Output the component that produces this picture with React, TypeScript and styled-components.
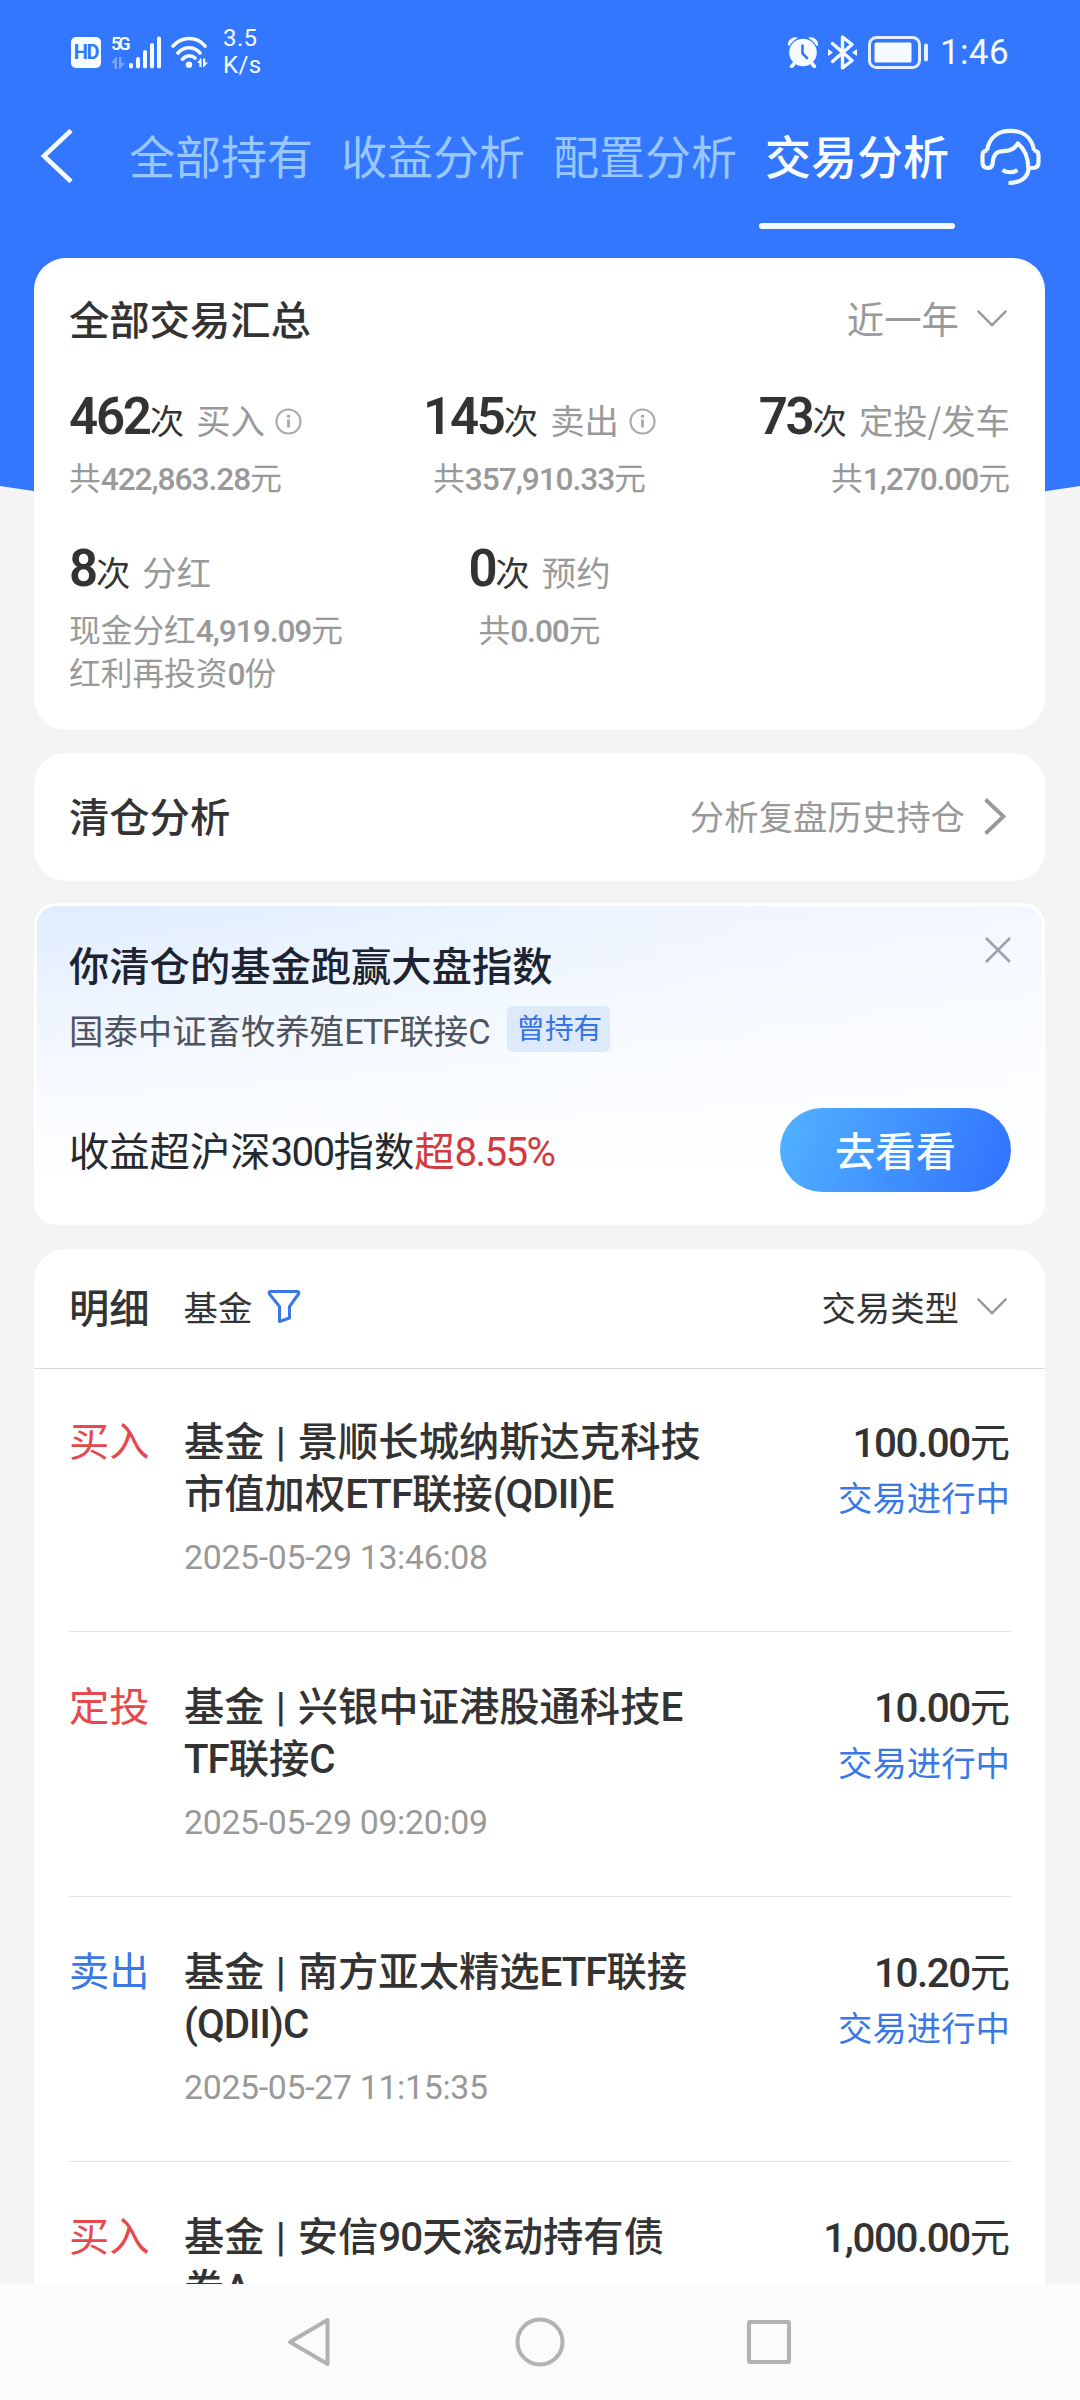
import React from "react";
import styled, { createGlobalStyle } from "styled-components";

const cjk = `"Noto Sans CJK SC", "Noto Sans", sans-serif`;
const latin = `Roboto, "Noto Sans CJK SC", sans-serif`;

const c = {
  blue: "#3377ff",
  link: "#3b78e7",
  red: "#e5484d",
  ink: "#333333",
  grey: "#999999",
  page: "#f4f4f4",
};

const GlobalStyle = createGlobalStyle`
  * { box-sizing: border-box; }
  body { margin: 0; background: ${c.page}; }
`;

const Screen = styled.div`
  width: 1080px;
  height: 2400px;
  overflow: hidden;
  display: flex;
  flex-direction: column;
  background: ${c.page};
  color: ${c.ink};
  font-family: ${cjk};
  white-space: nowrap;
`;

const Header = styled.header`
  flex: none;
  height: 530px;
  background: ${c.blue};
  clip-path: path("M0 0H1080V486Q540 570 0 486Z");
`;

const StatusBar = styled.div`
  display: flex;
  justify-content: space-between;
  height: 104px;
  padding: 0 71px 0 71px;
  color: #f6fbff;
  font-family: ${latin};
`;

const StatusGroup = styled.div`
  display: flex;
  align-items: center;
  height: 104px;
`;

const HdBadge = styled.span`
  width: 30px;
  height: 31px;
  margin-top: 1px;
  border-radius: 5px;
  background: #f6fbff;
  color: ${c.blue};
  font-size: 20px;
  font-weight: 700;
  line-height: 31px;
  text-align: center;
  letter-spacing: -1.2px;
`;

const Cellular = styled.div`
  display: flex;
  align-items: flex-start;
  height: 33px;
  margin-left: 10px;
`;

const Generation = styled.div`
  display: flex;
  flex-direction: column;
  width: 17px;
  gap: 5px;
  font-size: 18px;
  font-weight: 600;
  line-height: 16px;
  letter-spacing: -3px;
`;

const Speed = styled.div`
  margin-left: 14px;
  padding-bottom: 0;
  font-size: 24px;
  font-weight: 400;
  line-height: 27px;
  letter-spacing: 0.4px;
`;

const Clock = styled.span`
  margin-left: 11px;
  font-size: 35px;
  font-weight: 400;
  letter-spacing: 0.4px;
`;

const Spaced = styled.span<{ $left: number }>`
  display: flex;
  margin-left: ${(p) => p.$left}px;
`;

const NavBar = styled.nav`
  display: flex;
  align-items: flex-start;
  height: 126px;
  padding: 0 39px 0 40px;
`;

const BackButton = styled.span`
  display: flex;
  width: 89px;
  padding-top: 25px;
`;

const Tabs = styled.div`
  display: flex;
  gap: 28px;
  flex: 1;
`;

const Tab = styled.div<{ $active?: boolean }>`
  display: flex;
  flex-direction: column;
  align-items: center;
  width: 184px;
  font-size: 46px;
  line-height: 66px;
  padding-top: 17px;
  color: ${(p) => (p.$active ? "#f8fdff" : "#99c7ff")};
  font-weight: ${(p) => (p.$active ? 500 : 400)};
`;

const Underline = styled.span`
  width: 196px;
  height: 6px;
  margin-top: 36px;
  border-radius: 3px;
  background: #f4fbff;
`;

const Support = styled.span`
  display: flex;
  padding-top: 24px;
`;

const Content = styled.main`
  position: relative;
  flex: 1;
  min-height: 0;
  overflow: hidden;
  margin-top: -272px;
  padding: 0 35px 0 34px;
`;

const Card = styled.section`
  border-radius: 32px;
  background: #fff;
`;

const SummaryCard = styled(Card)`
  height: 472px;
  padding: 32px 35px 0;
`;

const Row = styled.div`
  display: flex;
  align-items: center;
  justify-content: space-between;
`;

const Title = styled.h2<{ $color?: string }>`
  margin: 0;
  font-size: 40.3px;
  font-weight: 500;
  line-height: 56px;
  color: ${(p) => p.$color ?? c.ink};
`;

const Choice = styled.span<{ $size: number; $color: string; $gap: number }>`
  display: flex;
  align-items: center;
  gap: ${(p) => p.$gap}px;
  padding-right: 3px;
  font-size: ${(p) => p.$size}px;
  line-height: 56px;
  color: ${(p) => p.$color};
`;

const StatGrid = styled.div`
  display: grid;
  grid-template-columns: repeat(3, 1fr);
  grid-template-rows: 152px auto;
  margin-top: 41px;
`;

const Stat = styled.div<{ $align: "flex-start" | "center" | "flex-end" }>`
  display: flex;
  flex-direction: column;
  align-items: ${(p) => p.$align};
`;

const StatHead = styled.div`
  display: flex;
  align-items: baseline;
  height: 60px;
  font-size: 34.4px;
  line-height: 60px;
`;

const Count = styled.span`
  font-family: ${latin};
  font-size: 51px;
  font-weight: 600;
  letter-spacing: -2.2px;
`;

const StatLabel = styled.span`
  margin-left: 12px;
  color: ${c.grey};
`;

const InfoMark = styled.span`
  align-self: center;
  display: flex;
  margin: 8px 0 0 10px;
`;

const StatNote = styled.div`
  margin-top: 8px;
  font-size: 31.7px;
  line-height: 43px;
  color: ${c.grey};
`;

const Latin = styled.span<{ $weight?: number; $track?: number }>`
  font-family: ${latin};
  font-weight: ${(p) => p.$weight ?? "inherit"};
  letter-spacing: ${(p) => p.$track ?? -0.04}em;
  line-height: 1;
`;

const ReviewCard = styled(Card)`
  display: flex;
  align-items: center;
  justify-content: space-between;
  height: 128px;
  margin-top: 23px;
  padding: 0 35px 5px;
`;

const ReviewArrow = styled.span`
  display: flex;
  padding-top: 4px;
`;

const PromoCard = styled(Card)`
  height: 322px;
  margin-top: 22px;
  padding: 30px 31px 0 32px;
  border: 3px solid #fff;
  border-radius: 22px;
  background:
    linear-gradient(180deg, rgba(255, 255, 255, 0) 0%, rgba(255, 255, 255, 0.65) 50%, #fff 88%),
    linear-gradient(90deg, #e0edff 0%, #e9f3ff 45%, #f0f5ff 70%, #f3f8ff 100%);
`;

const CloseMark = styled.span`
  display: flex;
  align-self: flex-start;
  padding: 1px 0 0;
`;

const FundLine = styled.div`
  display: flex;
  align-items: center;
  height: 48px;
  margin-top: 13px;
  font-size: 34.4px;
  line-height: 48px;
  color: #50545f;
`;

const HeldTag = styled.span`
  margin-left: 18px;
  height: 46px;
  padding: 0 8px 0 9px;
  border-radius: 6px;
  background: #dceafc;
  color: #3573e6;
  font-size: 28.7px;
  line-height: 41px;
`;

const ResultRow = styled(Row)`
  height: 84px;
  margin-top: 55px;
  font-size: 40.3px;
  line-height: 54px;
  color: #262a2f;
`;

const ResultText = styled.span`
  padding-bottom: 2px;
`;

const Gain = styled.span`
  color: #d13a3e;
`;

const GoButton = styled.button`
  width: 231px;
  height: 84px;
  padding: 0 0 4px;
  border: 0;
  border-radius: 42px;
  background: linear-gradient(110deg, #50b0ff 5%, #3f8fff 55%, #3274ff 95%);
  color: #f8fdff;
  font-family: ${cjk};
  font-size: 40.3px;
  font-weight: 500;
`;

const DetailCard = styled(Card)`
  margin-top: 24px;
  height: 1200px;
`;

const DetailHead = styled(Row)`
  height: 120px;
  padding: 0 35px 5px;
  border-bottom: 1px solid #dcdcdc;
`;

const FilterGroup = styled.div`
  display: flex;
  align-items: center;
`;

const FilterLabel = styled.span`
  margin: 0 15px 0 34px;
  font-size: 34.4px;
  line-height: 56px;
`;

const Record = styled.article`
  display: grid;
  grid-template-columns: 115px 1fr auto;
  height: 265.2px;
  margin: 0 34px 0 35px;
  padding: 46px 1px 0 0;
  border-bottom: 1px solid #e2e2e2;
  font-size: 40.3px;
  line-height: 52px;

  &:nth-child(2) {
    height: 263px;
    padding-top: 44px;
  }
`;

const Kind = styled.span<{ $color: string }>`
  color: ${(p) => p.$color};
`;

const FundName = styled.div`
  font-weight: 500;
`;

const Bar = styled.span`
  margin: 0 3px 0 2px;
  font-family: ${latin};
  line-height: 1;
`;

const Stamp = styled.div`
  margin-top: 16px;
  font-family: ${latin};
  font-size: 33.8px;
  line-height: 50px;
  letter-spacing: -0.3px;
  color: ${c.grey};
`;

const AmountBox = styled.div`
  text-align: right;
`;

const Amount = styled.div`
  line-height: 56px;
  margin-top: -1px;
`;

const State = styled.div`
  margin-top: 2px;
  font-size: 34.4px;
  color: ${c.link};
`;

const SystemNav = styled.footer`
  flex: none;
  display: flex;
  align-items: center;
  height: 116px;
  padding-left: 284px;
  background: #fafbfd;
`;

/* Runs of ASCII are set in the narrower latin face, the rest stays CJK. */
const Mixed = ({ text, weight, track }: { text: string; weight?: number; track?: number }) => (
  <>
    {text.split(/([\x21-\x7e]+)/).map((part, i) => {
      if (i % 2 === 0) return part;
      if (part === "|") return <Bar key={i}>{part}</Bar>;
      return (
        <Latin key={i} $weight={weight} $track={track}>
          {part}
        </Latin>
      );
    })}
  </>
);

const ChevronDown = () => (
  <svg width="30" height="17" viewBox="0 0 30 17" fill="none" stroke="#999" strokeWidth="2.4">
    <path d="M0.8 0.8L15 15.2L29.2 0.8" />
  </svg>
);

const Info = () => (
  <svg width="27" height="27" viewBox="0 0 27 27" fill="none" stroke="#aaa" strokeWidth="2.2">
    <circle cx="13.5" cy="13.5" r="12" />
    <path d="M13.5 11.5V19.5" strokeWidth="2.8" />
    <circle cx="13.5" cy="8.2" r="1.7" fill="#aaa" stroke="none" />
  </svg>
);

const DataArrows = ({ opacity }: { opacity: number }) => (
  <svg width="14" height="12" viewBox="0 0 14 12" fill="#f6fbff" opacity={opacity}>
    <path d="M0 6L5 0H6V12H3.5V6Z M14 6L9 12H8V0H10.5V6Z" />
  </svg>
);

const Signal = () => (
  <svg width="33" height="33" viewBox="0 0 33 33" stroke="#f6fbff" strokeWidth="4" strokeLinecap="round">
    <path d="M3 29V30.5M10 23V30.5M17 16V30.5M24 9V30.5M31 2.5V30.5" />
  </svg>
);

const Wifi = () => (
  <svg width="38" height="33" viewBox="0 0 38 33" fill="none" stroke="#f6fbff" strokeWidth="3.6" strokeLinecap="round">
    <path d="M2 10C11 0 26 0 34 10M7 17C13 10 23 10 29 17M11.5 23.2C15 19.2 21 19.2 24 22" />
    <circle cx="18" cy="28.7" r="3.2" fill="#f6fbff" stroke="none" />
    <path d="M26 27L29.5 22.5H30.5V31H28.3V27Z M37 26.5L33 31H32V22.5H34.2V26.5Z" fill="#f6fbff" stroke="none" />
  </svg>
);

const Alarm = () => (
  <svg width="32" height="32" viewBox="0 0 32 32" fill="none" strokeLinecap="round">
    <path d="M7.5 27.5L4.5 30.5M24.5 27.5L27.5 30.5" stroke="#f6fbff" strokeWidth="3.4" />
    <path d="M1 9.5C0.5 4 5 0 10.5 1.5L8 5Q4 7 3 10ZM31 9.5C31.5 4 27 0 21.5 1.5L24 5Q28 7 29 10Z" fill="#f6fbff" />
    <circle cx="16" cy="16.5" r="15" fill={c.blue} />
    <circle cx="16" cy="16.5" r="13.8" fill="#f6fbff" />
    <path d="M7 27.5L5 30M25 27.5L27 30" stroke="#f6fbff" strokeWidth="3.4" />
    <path d="M15.5 9.5V17.5L20 22" stroke={c.blue} strokeWidth="2.6" />
  </svg>
);

const Bluetooth = () => (
  <svg width="29" height="35" viewBox="0 0 29 35" fill="none" stroke="#f6fbff" strokeWidth="3.4" strokeLinejoin="round" strokeLinecap="round">
    <path d="M4.5 8.5L24 25.5L14.5 33V2L24 9.5L4.5 26.5" />
    <path d="M0.5 15L4 17.5L0.5 20ZM28.5 15L25 17.5L28.5 20Z" fill="#f6fbff" strokeWidth="1.2" />
  </svg>
);

const Battery = () => (
  <svg width="61" height="33" viewBox="0 0 61 33" fill="none" stroke="#e4f0ff" strokeWidth="3">
    <rect x="1.5" y="1.5" width="50" height="30" rx="7" />
    <rect x="6.5" y="6.5" width="37" height="20" rx="1.5" fill="#f6fbff" stroke="none" />
    <path d="M58 9.5V23.5" strokeWidth="4" strokeLinecap="round" />
  </svg>
);

const Back = () => (
  <svg width="33" height="54" viewBox="0 0 33 54" fill="none" stroke="#f8fdff" strokeWidth="4.6">
    <path d="M31 1.5L4 27L31 52.5" />
  </svg>
);

const Headset = () => (
  <svg width="61" height="58" viewBox="0 0 61 58" fill="none" stroke="#f4fbff" strokeWidth="4.2" strokeLinejoin="round">
    <path d="M7 22.5C9 9.5 18 2.8 30.5 2.8S52 9.5 54 22.5" />
    <path d="M7.5 22.5C4 22.5 2.5 24.5 2.5 27V34C2.5 38 4 40 8 40C11.5 40 12.5 38 12.7 35C13.5 24.5 18 23 26 22.8C31 22.6 34.5 20.5 38 15.5C44 20.5 48 27 48.3 40" />
    <path d="M53.5 22.5C57 22.5 58.5 24.5 58.5 27V34C58.5 38 57 40 53 40H48.5C48.5 49 41 55 28.5 55" />
    <path d="M22.5 42C27 45 33 45 37.5 42" />
  </svg>
);

const ChevronRight = () => (
  <svg width="24" height="37" viewBox="0 0 24 37" fill="none" stroke="#999" strokeWidth="3.8">
    <path d="M2.5 1.5L20.5 18.5L2.5 35.5" />
  </svg>
);

const Close = () => (
  <svg width="26" height="26" viewBox="0 0 26 26" fill="none" stroke="#9aa0ad" strokeWidth="2.5">
    <path d="M1 1L25 25M25 1L1 25" />
  </svg>
);

const Funnel = () => (
  <svg width="34" height="35" viewBox="0 0 34 35" fill="none" stroke={c.link} strokeWidth="3" strokeLinejoin="round">
    <path d="M3.5 2.5H30.5C32 2.5 32.3 4 31.5 5L22.5 17.5V29L12.5 32.5V17.5L2.5 5C1.7 4 2 2.5 3.5 2.5Z" />
  </svg>
);

const NavGlyphs = () => (
  <svg width="512" height="58" viewBox="0 0 512 58" fill="none" stroke="#b2b2b5" strokeWidth="4" strokeLinejoin="round">
    <path d="M43.5 7V51L6 29Z" />
    <circle cx="256" cy="29" r="22.5" />
    <rect x="465" y="9" width="40" height="40" rx="1" />
  </svg>
);

type StatItem = {
  count: string;
  label: string;
  info?: boolean;
  notes: string[];
  align: "flex-start" | "center" | "flex-end";
};

const stats: StatItem[] = [
  { count: "462", label: "买入", info: true, notes: ["共422,863.28元"], align: "flex-start" },
  { count: "145", label: "卖出", info: true, notes: ["共357,910.33元"], align: "center" },
  { count: "73", label: "定投/发车", notes: ["共1,270.00元"], align: "flex-end" },
  { count: "8", label: "分红", notes: ["现金分红4,919.09元", "红利再投资0份"], align: "flex-start" },
  { count: "0", label: "预约", notes: ["共0.00元"], align: "center" },
];

const records = [
  { kind: "买入", color: c.red, name: ["基金 | 景顺长城纳斯达克科技", "市值加权ETF联接(QDII)E"], time: "2025-05-29 13:46:08", amount: "100.00元", state: "交易进行中" },
  { kind: "定投", color: c.red, name: ["基金 | 兴银中证港股通科技E", "TF联接C"], time: "2025-05-29 09:20:09", amount: "10.00元", state: "交易进行中" },
  { kind: "卖出", color: c.link, name: ["基金 | 南方亚太精选ETF联接", "(QDII)C"], time: "2025-05-27 11:15:35", amount: "10.20元", state: "交易进行中" },
  { kind: "买入", color: c.red, name: ["基金 | 安信90天滚动持有债", "券A"], time: "", amount: "1,000.00元", state: "" },
];

const tabs = ["全部持有", "收益分析", "配置分析", "交易分析"];

export default function App() {
  return (
    <Screen>
      <GlobalStyle />
      <Header>
        <StatusBar>
          <StatusGroup>
            <HdBadge>HD</HdBadge>
            <Cellular>
              <Generation>
                5G
                <DataArrows opacity={0.35} />
              </Generation>
              <Signal />
            </Cellular>
            <Spaced $left={10}>
              <Wifi />
            </Spaced>
            <Speed>
              3.5
              <br />
              K/s
            </Speed>
          </StatusGroup>
          <StatusGroup>
            <Alarm />
            <Spaced $left={9}>
              <Bluetooth />
            </Spaced>
            <Spaced $left={11}>
              <Battery />
            </Spaced>
            <Clock>1:46</Clock>
          </StatusGroup>
        </StatusBar>
        <NavBar>
          <BackButton>
            <Back />
          </BackButton>
          <Tabs>
            {tabs.map((t, i) => (
              <Tab key={t} $active={i === 3}>
                {t}
                {i === 3 && <Underline />}
              </Tab>
            ))}
          </Tabs>
          <Support>
            <Headset />
          </Support>
        </NavBar>
      </Header>

      <Content>
        <SummaryCard>
          <Row>
            <Title>全部交易汇总</Title>
            <Choice $size={37.4} $color={c.grey} $gap={18}>
              近一年
              <ChevronDown />
            </Choice>
          </Row>
          <StatGrid>
            {stats.map((s) => (
              <Stat key={s.label} $align={s.align}>
                <StatHead>
                  <Count>{s.count}</Count>次<StatLabel>{s.label}</StatLabel>
                  {s.info && (
                    <InfoMark>
                      <Info />
                    </InfoMark>
                  )}
                </StatHead>
                <StatNote>
                  {s.notes.map((n) => (
                    <div key={n}>
                      <Mixed text={n} weight={500} track={-0.033} />
                    </div>
                  ))}
                </StatNote>
              </Stat>
            ))}
          </StatGrid>
        </SummaryCard>

        <ReviewCard>
          <Title>清仓分析</Title>
          <Choice $size={34.4} $color={c.grey} $gap={18}>
            分析复盘历史持仓
            <ReviewArrow>
              <ChevronRight />
            </ReviewArrow>
          </Choice>
        </ReviewCard>

        <PromoCard>
          <Row>
            <Title $color="#1d2330">你清仓的基金跑赢大盘指数</Title>
            <CloseMark>
              <Close />
            </CloseMark>
          </Row>
          <FundLine>
            <span>
              <Mixed text="国泰中证畜牧养殖ETF联接C" />
            </span>
            <HeldTag>曾持有</HeldTag>
          </FundLine>
          <ResultRow>
            <ResultText>
              <Mixed text="收益超沪深300指数" />
              <Gain>
                <Mixed text="超8.55%" />
              </Gain>
            </ResultText>
            <GoButton>去看看</GoButton>
          </ResultRow>
        </PromoCard>

        <DetailCard>
          <DetailHead>
            <FilterGroup>
              <Title>明细</Title>
              <FilterLabel>基金</FilterLabel>
              <Funnel />
            </FilterGroup>
            <Choice $size={34.4} $color={c.ink} $gap={18}>
              交易类型
              <ChevronDown />
            </Choice>
          </DetailHead>
          {records.map((r, i) => (
            <Record key={i}>
              <Kind $color={r.color}>{r.kind}</Kind>
              <div>
                {r.name.map((line) => (
                  <FundName key={line}>
                    <Mixed text={line} track={-0.025} />
                  </FundName>
                ))}
                <Stamp>{r.time}</Stamp>
              </div>
              <AmountBox>
                <Amount>
                  <Mixed text={r.amount} weight={500} track={-0.035} />
                </Amount>
                <State>{r.state}</State>
              </AmountBox>
            </Record>
          ))}
        </DetailCard>
      </Content>

      <SystemNav>
        <NavGlyphs />
      </SystemNav>
    </Screen>
  );
}
